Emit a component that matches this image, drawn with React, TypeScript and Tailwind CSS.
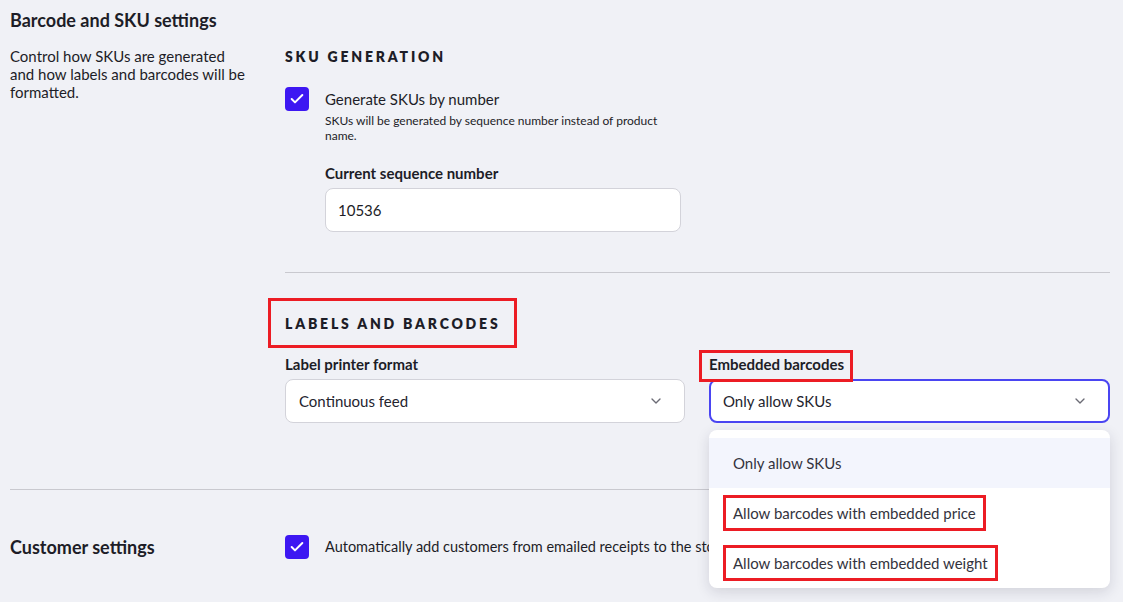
import { Check, ChevronDown } from "lucide-react"
import type { ReactNode } from "react"

const embeddedOptions = [
  { label: "Only allow SKUs", active: true, marked: false },
  { label: "Allow barcodes with embedded price", active: false, marked: true },
  { label: "Allow barcodes with embedded weight", active: false, marked: true },
]

// red callout frame drawn over a piece of content
function Callout({ children, className }: { children: ReactNode; className: string }) {
  return (
    <div className="flex">
      <span className="relative block">
        {children}
        <span className={`pointer-events-none absolute border-[3px] border-[#ec1c24] ${className}`} />
      </span>
    </div>
  )
}

function Checkbox() {
  return (
    <span className="flex h-6 w-6 shrink-0 items-center justify-center rounded-[4px] bg-[#3d17f2]">
      <Check className="h-4 w-4 text-white" strokeWidth={3} />
    </span>
  )
}

function SectionHeading({ children }: { children: ReactNode }) {
  return <h3 className="text-[14px] leading-5 font-extrabold tracking-[0.2em] text-[#1d1d27] uppercase">{children}</h3>
}

function Select({ value, focused }: { value: string; focused?: boolean }) {
  return (
    <div
      className={`flex h-[44px] items-center justify-between rounded-lg bg-white pr-5 pl-3 text-[15px] text-[#24242e] ${
        focused ? "border-2 border-[#4a45f2]" : "border border-[#d3d3da] pl-[13px]"
      }`}
    >
      <span>{value}</span>
      <ChevronDown className="h-4 w-4 text-[#6b6b75]" strokeWidth={2} />
    </div>
  )
}

export default function App() {
  return (
    <div className="min-h-screen bg-[#f0f1f6] text-[#1d1d27]" style={{ fontFamily: "Lato, 'Noto Sans', sans-serif" }}>
      {/* Barcode and SKU settings */}
      <section className="pr-[13px] pl-[10px]">
        <h2 className="pt-2 text-[18px] leading-6 font-bold">Barcode and SKU settings</h2>
        <div className="mt-[15px] grid grid-cols-[275px_1fr]">
          <p className="w-[240px] text-[15px] leading-[18px]">
            Control how SKUs are generated and how labels and barcodes will be formatted.
          </p>

          <div>
            <SectionHeading>SKU generation</SectionHeading>
            <div className="mt-5 flex gap-4">
              <Checkbox />
              <div className="pt-[1px]">
                <div className="text-[15px] leading-[22px]">Generate SKUs by number</div>
                <p className="mt-[3px] w-[345px] text-[12px] leading-[15px]">
                  SKUs will be generated by sequence number instead of product name.
                </p>
                <label className="mt-[20px] block text-[15px] leading-5 font-bold">Current sequence number</label>
                <div className="mt-[5px] flex h-[44px] w-[356px] items-center rounded-lg border border-[#d3d3da] bg-white px-3 text-[15px]">
                  10536
                </div>
              </div>
            </div>

            <div className="mt-10 border-t border-[#c9c9cf]" />

            <div className="mt-[41px]">
              <Callout className="-top-[16px] -right-[17px] -bottom-[14px] -left-[17px]">
                <SectionHeading>Labels and barcodes</SectionHeading>
              </Callout>
            </div>

            <div className="mt-5 grid grid-cols-[400px_401px] gap-6">
              <div>
                <label className="block text-[15px] leading-5 font-bold">Label printer format</label>
                <div className="mt-[5px]">
                  <Select value="Continuous feed" />
                </div>
              </div>
              <div className="relative">
                <Callout className="-top-[4px] -right-[9px] -bottom-[8px] -left-[10px]">
                  <label className="block text-[15px] leading-5 font-bold">Embedded barcodes</label>
                </Callout>
                <div className="mt-[5px]">
                  <Select value="Only allow SKUs" focused />
                </div>

                {/* open options list */}
                <ul className="absolute top-[76px] right-0 left-0 z-10 rounded-lg bg-white pt-2 text-[15px] text-[#33333d] shadow-[0_4px_14px_rgba(30,30,60,0.14)]">
                  {embeddedOptions.map((opt) => (
                    <li
                      key={opt.label}
                      className={`flex h-[50px] items-center px-6 ${opt.active ? "bg-[#f3f5fd]" : ""}`}
                    >
                      {opt.marked ? (
                        <Callout className="-top-[7px] -right-[10px] -bottom-[7px] -left-[10px]">
                          <span>{opt.label}</span>
                        </Callout>
                      ) : (
                        <span>{opt.label}</span>
                      )}
                    </li>
                  ))}
                </ul>
              </div>
            </div>
          </div>
        </div>
        <div className="mt-[66px] border-t border-[#c9c9cf]" />
      </section>

      {/* Customer settings */}
      <section className="grid grid-cols-[275px_1fr] items-center pt-[45px] pl-[10px]">
        <h2 className="text-[18px] leading-6 font-bold">Customer settings</h2>
        <div className="flex items-center gap-4">
          <Checkbox />
          <span className="text-[14.5px] whitespace-nowrap">
            Automatically add customers from emailed receipts to the store's customer list
          </span>
        </div>
      </section>
    </div>
  )
}
